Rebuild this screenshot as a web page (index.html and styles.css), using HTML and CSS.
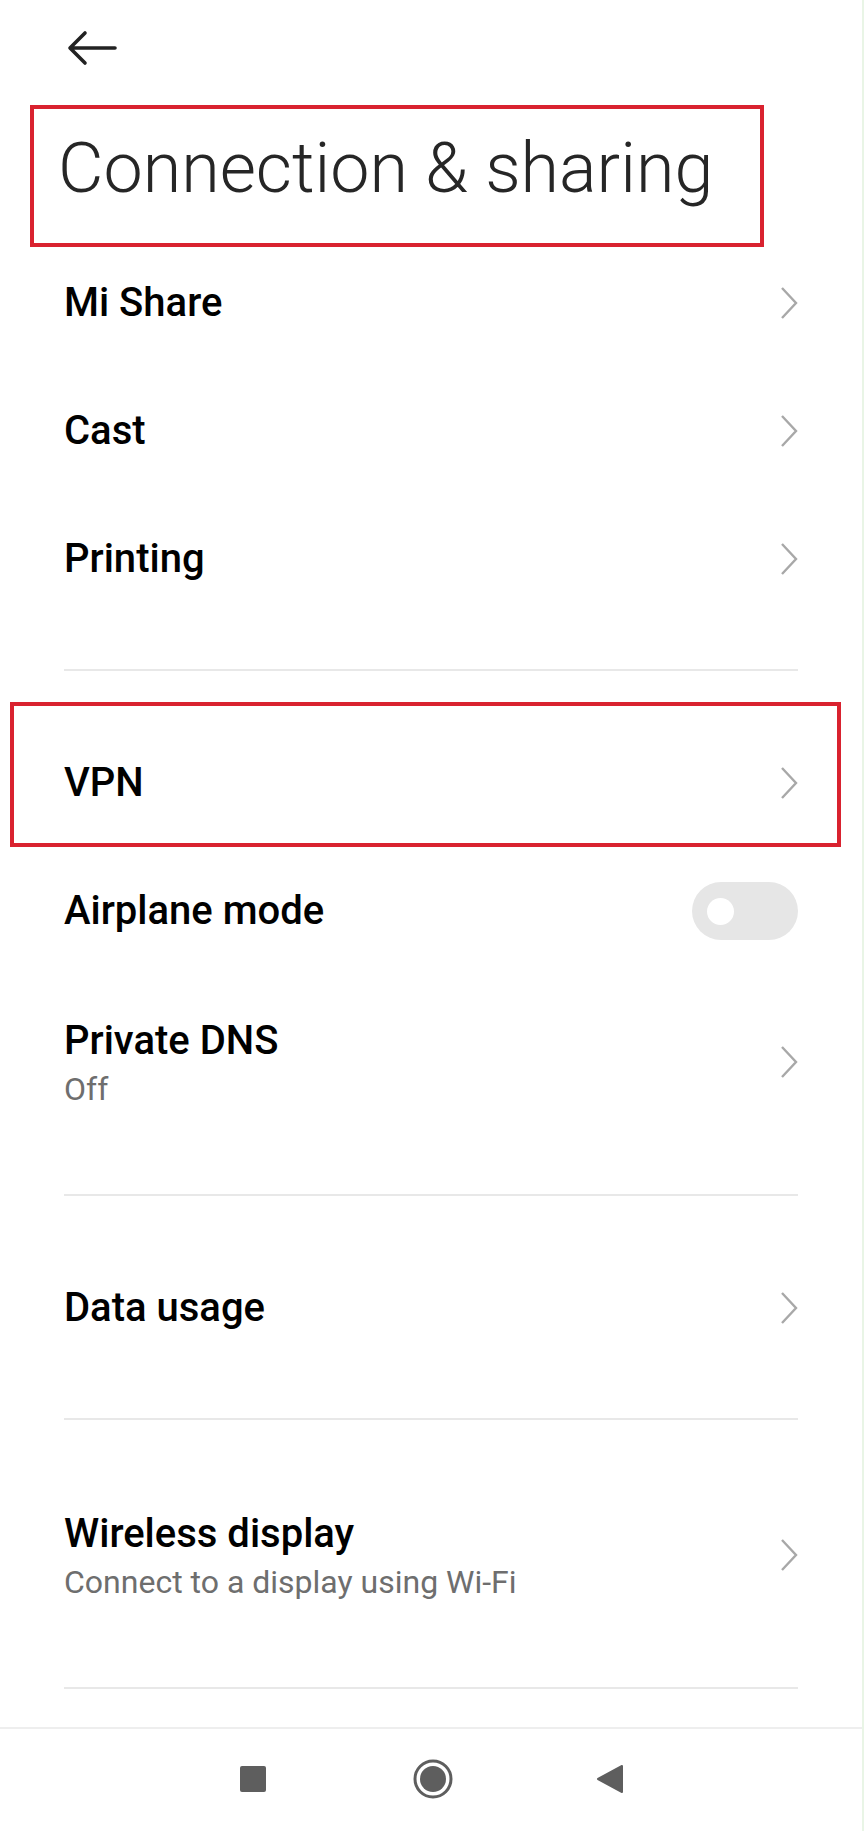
FILE: index.html
```html
<!DOCTYPE html>
<html lang="en">
<head>
    <meta charset="UTF-8">
    <meta name="viewport" content="width=device-width, initial-scale=1.0">
    <title>Connection &amp; sharing</title>
    <link rel="stylesheet" href="styles.css">
</head>
<body>
    <div class="screen">
        <div class="topbar">
            <svg class="back" width="52" height="36" viewBox="0 0 52 36">
                <path d="M48 18 H4 M18 3 L3 18 L18 33" fill="none" stroke="#222" stroke-width="3.6" stroke-linecap="round" stroke-linejoin="round"/>
            </svg>
        </div>

        <div class="title-box">
            <h1>Connection &amp; sharing</h1>
        </div>

        <div class="group first">
            <div class="row">
                <span class="label">Mi Share</span>
                <svg class="chevron" width="20" height="34" viewBox="0 0 20 34"><path d="M3 2 L17 17 L3 32" fill="none" stroke="#a8a8a8" stroke-width="2.4"/></svg>
            </div>
            <div class="row">
                <span class="label">Cast</span>
                <svg class="chevron" width="20" height="34" viewBox="0 0 20 34"><path d="M3 2 L17 17 L3 32" fill="none" stroke="#a8a8a8" stroke-width="2.4"/></svg>
            </div>
            <div class="row">
                <span class="label">Printing</span>
                <svg class="chevron" width="20" height="34" viewBox="0 0 20 34"><path d="M3 2 L17 17 L3 32" fill="none" stroke="#a8a8a8" stroke-width="2.4"/></svg>
            </div>
        </div>
        <div class="divider"></div>

        <div class="group">
            <div class="row highlight">
                <span class="label">VPN</span>
                <svg class="chevron" width="20" height="34" viewBox="0 0 20 34"><path d="M3 2 L17 17 L3 32" fill="none" stroke="#a8a8a8" stroke-width="2.4"/></svg>
            </div>
            <div class="row">
                <span class="label">Airplane mode</span>
                <div class="toggle"><div class="knob"></div></div>
            </div>
            <div class="row two">
                <div class="text">
                    <span class="label">Private DNS</span>
                    <span class="sub">Off</span>
                </div>
                <svg class="chevron" width="20" height="34" viewBox="0 0 20 34"><path d="M3 2 L17 17 L3 32" fill="none" stroke="#a8a8a8" stroke-width="2.4"/></svg>
            </div>
        </div>
        <div class="divider"></div>

        <div class="group">
            <div class="row">
                <span class="label">Data usage</span>
                <svg class="chevron" width="20" height="34" viewBox="0 0 20 34"><path d="M3 2 L17 17 L3 32" fill="none" stroke="#a8a8a8" stroke-width="2.4"/></svg>
            </div>
        </div>
        <div class="divider"></div>

        <div class="group">
            <div class="row two">
                <div class="text">
                    <span class="label">Wireless display</span>
                    <span class="sub">Connect to a display using Wi-Fi</span>
                </div>
                <svg class="chevron" width="20" height="34" viewBox="0 0 20 34"><path d="M3 2 L17 17 L3 32" fill="none" stroke="#a8a8a8" stroke-width="2.4"/></svg>
            </div>
        </div>
        <div class="divider"></div>

        <div class="navbar">
            <svg width="28" height="28" viewBox="0 0 28 28"><rect x="1" y="1" width="26" height="26" rx="2" fill="#5e5e5e"/></svg>
            <svg width="40" height="40" viewBox="0 0 40 40"><circle cx="20" cy="20" r="18" fill="none" stroke="#5e5e5e" stroke-width="3"/><circle cx="20" cy="20" r="13" fill="#5e5e5e"/></svg>
            <svg width="28" height="30" viewBox="0 0 28 30"><path d="M26 2 L26 28 L2 15 Z" fill="#5e5e5e" stroke="#5e5e5e" stroke-width="2" stroke-linejoin="round"/></svg>
        </div>
    </div>
</body>
</html>
```

FILE: styles.css
```css
body {
    margin: 0;
    padding: 0;
    background: #fff;
    font-family: Roboto, "Noto Sans", Arial, sans-serif;
}

.screen {
    width: 864px;
    height: 1831px;
    overflow: hidden;
    border-right: 2px solid #e9f5e6;
    box-sizing: border-box;
}

.topbar {
    height: 105px;
    padding-left: 67px;
    padding-top: 30px;
    box-sizing: border-box;
}

.back {
    display: block;
}

/* Caja roja del titulo */
.title-box {
    margin-left: 30px;
    width: 734px;
    height: 142px;
    border: 4px solid #d9222f;
    box-sizing: border-box;
    padding: 24px 0 0 24px;
}
.title-box h1 {
    margin: 0;
    font-size: 70px;
    line-height: 70px;
    font-weight: 300;
    color: #262626;
}

.group {
    display: flex;
    flex-direction: column;
    gap: 18px;
    padding: 57px 64px 55px 64px;
}
.group.first {
    padding-top: 1px;
}

.row {
    display: flex;
    align-items: center;
    justify-content: space-between;
    height: 110px;
}
.row.two {
    height: 155px;
}

.label {
    font-size: 40px;
    line-height: 52px;
    font-weight: 500;
    color: #000;
}

.text {
    display: flex;
    flex-direction: column;
    padding-top: 3px;
}

.sub {
    font-size: 32px;
    line-height: 45px;
    color: #6e6e6e;
}

.chevron {
    display: block;
    margin-right: -1px;
}

/* Caja roja del VPN */
.highlight {
    margin: -26px -43px -9px -54px;
    padding: 22px 39px 5px 50px;
    border: 4px solid #d9222f;
    height: auto;
}
.highlight .label {
    display: flex;
    align-items: center;
    height: 110px;
}

.toggle {
    width: 106px;
    height: 58px;
    border-radius: 29px;
    background: #e6e6e6;
    display: flex;
    align-items: center;
    padding-left: 15px;
    box-sizing: border-box;
}
.knob {
    width: 27px;
    height: 27px;
    border-radius: 50%;
    background: #fff;
}

.divider {
    height: 2px;
    margin: 0 64px;
    background: #e8e8e8;
}

.navbar {
    margin-top: 38px;
    border-top: 2px solid #eeeeee;
    height: 103px;
    display: flex;
    align-items: center;
    padding-bottom: 2px;
    box-sizing: border-box;
}
.navbar svg:nth-child(1) {
    margin-left: 239px;
}
.navbar svg:nth-child(2) {
    margin-left: 146px;
}
.navbar svg:nth-child(3) {
    margin-left: 143px;
}
```
